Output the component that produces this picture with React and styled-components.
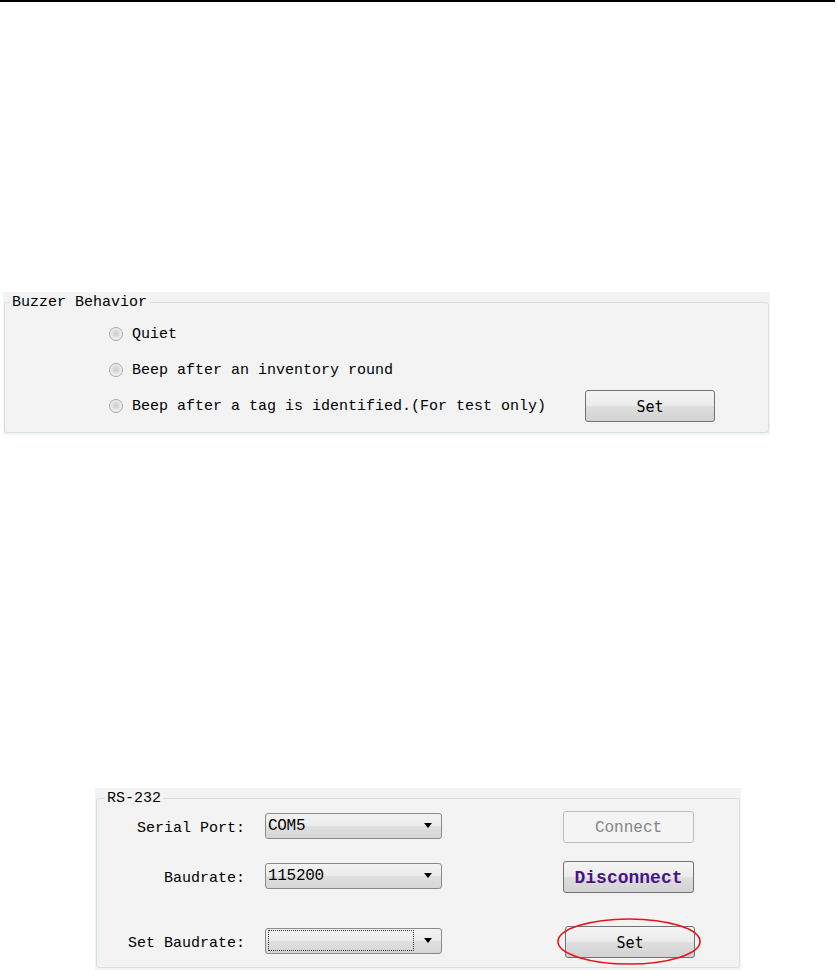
import React from "react";
import styled, { createGlobalStyle } from "styled-components";

const GlobalStyle = createGlobalStyle`
  body {
    margin: 0;
    background: #ffffff;
    font-family: "Liberation Mono", "DejaVu Sans Mono", monospace;
    color: #000;
  }
`;

const Page = styled.div`
  display: flex;
  flex-direction: column;
  width: 837px;
`;

const TopRule = styled.div`
  width: 835px;
  height: 2px;
  background: #000;
`;

const Panel = styled.div`
  position: relative;
  box-sizing: border-box;
  margin-top: ${(p) => p.$top}px;
  margin-left: ${(p) => p.$left}px;
  width: ${(p) => p.$width}px;
  padding: 0 1px 2px;
  background: #f3f3f3;
`;

const Group = styled.fieldset`
  margin: 0;
  padding: 0;
  min-width: 0;
  border: 1px solid #d5dfe5;
  border-radius: 3px;
`;

const Legend = styled.legend`
  margin-left: ${(p) => p.$offset}px;
  padding: 1px 2px 0;
  font: 15px/20px "Liberation Mono", monospace;
  color: #000;
`;

const GroupBody = styled.div`
  display: flex;
  flex-direction: column;
  padding: ${(p) => p.$pad};
`;

const RadioRow = styled.div`
  display: flex;
  align-items: center;
  height: 36px;
`;

const Radio = styled.span`
  box-sizing: border-box;
  width: 14px;
  height: 14px;
  border-radius: 50%;
  border: 1px solid #a9a9a9;
  background: radial-gradient(
    circle at 50% 45%,
    #cfcfcf 0,
    #dcdcdc 35%,
    #eeeeee 60%,
    #fafafa 100%
  );
  margin-right: 9px;
  flex: none;
`;

const RadioText = styled.span`
  padding-top: 2px;
  font: 15px/20px "Liberation Mono", monospace;
  white-space: nowrap;
`;

const WinButton = styled.div`
  box-sizing: border-box;
  display: flex;
  align-items: center;
  justify-content: center;
  width: ${(p) => p.$width || 131}px;
  height: 32px;
  margin-left: ${(p) => (p.$gap == null ? "auto" : `${p.$gap}px`)};
  border-radius: 3px;
  flex: none;
  border: 1px solid ${(p) => (p.$disabled ? "#b9bdc0" : "#727272")};
  background: ${(p) =>
    p.$disabled
      ? "#f4f4f4"
      : "linear-gradient(#f4f4f4 0%, #ececec 48%, #dedede 52%, #d2d2d2 100%)"};
  color: ${(p) => (p.$disabled ? "#858585" : p.$strong ? "#4a1486" : "#000")};
  font-family: ${(p) =>
    p.$plain ? '"DejaVu Sans Mono", monospace' : '"Liberation Mono", monospace'};
  font-size: ${(p) => (p.$strong ? 18 : p.$plain ? 15 : 16)}px;
  font-weight: ${(p) => (p.$strong ? 700 : 400)};
  padding-top: 1px;
`;

const FieldRow = styled.div`
  display: flex;
  align-items: center;
  height: 34px;
  margin-top: ${(p) => p.$top}px;
`;

const FieldLabel = styled.span`
  width: 148px;
  margin-right: 20px;
  padding-top: 3px;
  text-align: right;
  font: 15px/20px "Liberation Mono", monospace;
  white-space: nowrap;
  flex: none;
`;

const Dropdown = styled.div`
  box-sizing: border-box;
  display: flex;
  align-items: center;
  width: 177px;
  height: 26px;
  margin-top: -3px;
  padding: 0 9px 0 2px;
  border: 1px solid #8a8a8a;
  border-radius: 3px;
  background: linear-gradient(#f3f3f3 0%, #ebebeb 48%, #dfdfdf 52%, #d6d6d6 100%);
  font: 16px/20px "Liberation Mono", monospace;
  flex: none;
`;

const DropValue = styled.span`
  flex: 1;
  white-space: nowrap;
  letter-spacing: -0.3px;
`;

const FocusBox = styled.span`
  box-sizing: border-box;
  flex: 1;
  height: 21px;
  margin-right: 10px;
  border: 1px dotted #333;
`;

const Arrow = styled.span`
  width: 0;
  height: 0;
  border-left: 4.5px solid transparent;
  border-right: 4.5px solid transparent;
  border-top: 5px solid #000;
  flex: none;
`;

const Highlight = styled.svg`
  position: absolute;
  left: 462px;
  top: 130px;
  overflow: visible;
  pointer-events: none;
`;

const App = () => {
  return (
    <>
      <GlobalStyle />
      <Page>
        <TopRule />

        <Panel $top={290} $left={3} $width={767}>
          <Group>
            <Legend $offset={5}>Buzzer Behavior</Legend>
            <GroupBody $pad="3px 53px 8px 104px">
              <RadioRow>
                <Radio />
                <RadioText>Quiet</RadioText>
              </RadioRow>
              <RadioRow>
                <Radio />
                <RadioText>Beep after an inventory round</RadioText>
              </RadioRow>
              <RadioRow>
                <Radio />
                <RadioText>Beep after a tag is identified.(For test only)</RadioText>
                <WinButton $width={130} $plain>
                  Set
                </WinButton>
              </RadioRow>
            </GroupBody>
          </Group>
        </Panel>

        <Panel $top={353} $left={95} $width={646}>
          <Group>
            <Legend $offset={8}>RS-232</Legend>
            <GroupBody $pad="1px 0 8px 0">
              <FieldRow $top={0}>
                <FieldLabel>Serial Port:</FieldLabel>
                <Dropdown>
                  <DropValue>COM5</DropValue>
                  <Arrow />
                </Dropdown>
                <WinButton $gap={121} $disabled>
                  Connect
                </WinButton>
              </FieldRow>
              <FieldRow $top={16}>
                <FieldLabel>Baudrate:</FieldLabel>
                <Dropdown>
                  <DropValue>115200</DropValue>
                  <Arrow />
                </Dropdown>
                <WinButton $gap={121} $strong>
                  Disconnect
                </WinButton>
              </FieldRow>
              <FieldRow $top={31}>
                <FieldLabel>Set Baudrate:</FieldLabel>
                <Dropdown>
                  <FocusBox />
                  <Arrow />
                </Dropdown>
                <WinButton $gap={123} $width={130} $plain>
                  Set
                </WinButton>
              </FieldRow>
            </GroupBody>
          </Group>
          <Highlight width="144" height="47" viewBox="0 0 144 47">
            <ellipse cx="72" cy="23.5" rx="71" ry="22.5" fill="none" stroke="#e8141c" strokeWidth="1.6" />
          </Highlight>
        </Panel>
      </Page>
    </>
  );
};

export default App;
